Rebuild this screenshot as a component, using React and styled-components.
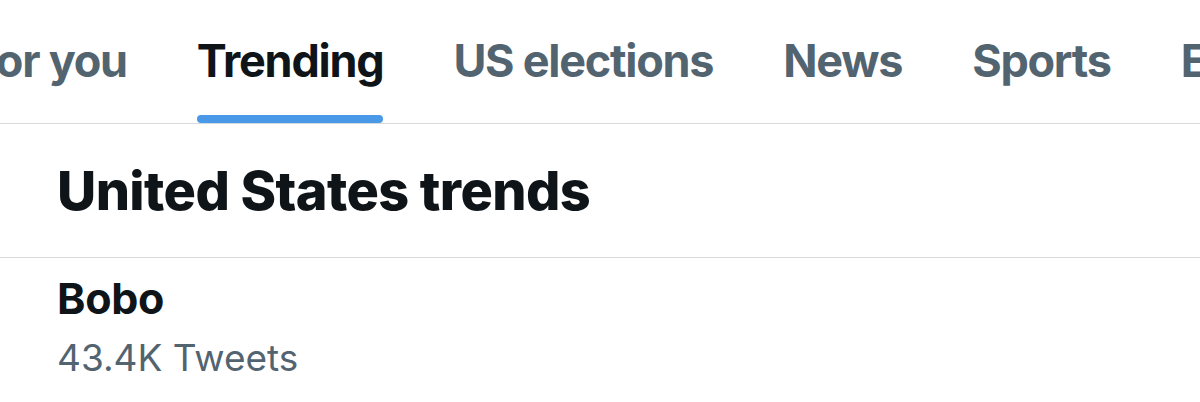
import React from "react";
import styled, { createGlobalStyle } from "styled-components";

const Global = createGlobalStyle`
  html, body { margin: 0; padding: 0; background: #ffffff; }
  body { font-family: Inter, "Noto Sans", sans-serif; -webkit-font-smoothing: antialiased; }
`;

const Page = styled.div`
  width: 1200px;
  height: 402px;
  overflow: hidden;
  background: #fff;
`;

const TabBar = styled.nav`
  height: 123px;
  border-bottom: 1.5px solid #d6dadd;
  overflow: hidden;
`;

const TabRow = styled.div`
  display: flex;
  height: 100%;
  margin-left: ${p => p.$offset}px;
  white-space: nowrap;
`;

const Tab = styled.div`
  position: relative;
  display: flex;
  align-items: center;
  padding: 0 35px 2px;
  font-size: 45px;
  font-weight: 700;
  letter-spacing: -1.25px;
  color: ${p => (p.$active ? "#0f1419" : "#536471")};
`;

const Indicator = styled.span`
  position: absolute;
  left: 35px;
  right: 35px;
  bottom: 0;
  height: 8px;
  border-radius: 4px;
  background: #4a98e8;
`;

const Heading = styled.h2`
  margin: 0;
  padding: 0 57px;
  height: 133px;
  display: flex;
  align-items: center;
  font-size: 54px;
  font-weight: 800;
  letter-spacing: -0.6px;
  color: #0f1419;
  border-bottom: 1.5px solid #d6dadd;
`;

const Trend = styled.div`
  padding: 14px 57px 0;
  display: flex;
  flex-direction: column;
  gap: 11px;
`;

const TrendName = styled.div`
  font-size: 43px;
  font-weight: 700;
  color: #0f1419;
  letter-spacing: -0.3px;
`;

const TrendMeta = styled.div`
  font-size: 37px;
  font-weight: 400;
  color: #536471;
`;

const tabs = ["For you", "Trending", "US elections", "News", "Sports", "Entertainment"];

export default function App() {
  return (
    <Page>
      <Global />
      <TabBar>
        <TabRow $offset={-63}>
          {tabs.map(t => (
            <Tab key={t} $active={t === "Trending"}>
              {t}
              {t === "Trending" && <Indicator />}
            </Tab>
          ))}
        </TabRow>
      </TabBar>
      <Heading>United States trends</Heading>
      <Trend>
        <TrendName>Bobo</TrendName>
        <TrendMeta>43.4K Tweets</TrendMeta>
      </Trend>
    </Page>
  );
}
